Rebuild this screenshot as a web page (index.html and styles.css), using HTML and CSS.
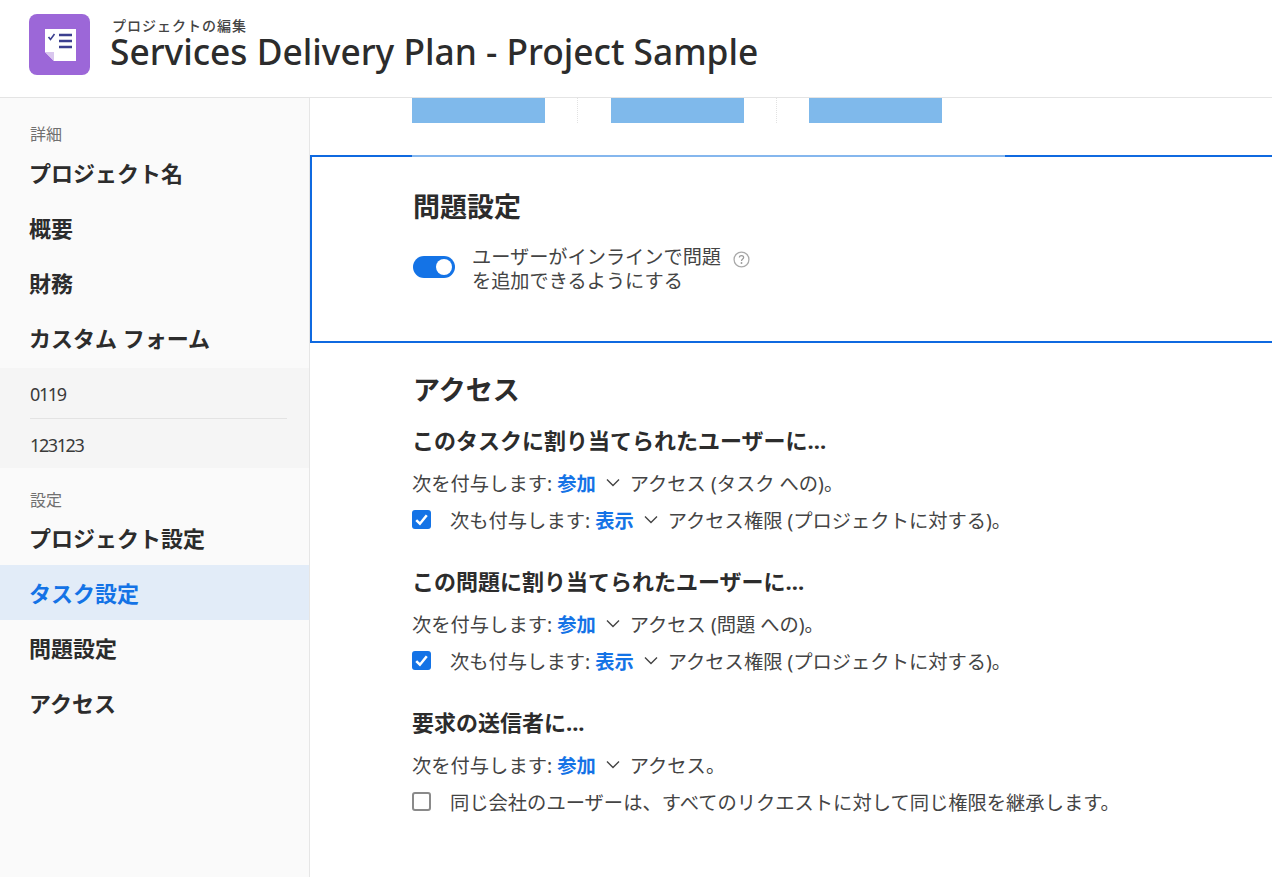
FILE: index.html
```html
<!DOCTYPE html>
<html lang="ja">

<head>
    <meta charset="UTF-8">
    <meta name="viewport" content="width=device-width, initial-scale=1.0">
    <title>Services Delivery Plan - Project Sample</title>

    <link rel="stylesheet" href="styles.css">
</head>

<body>
    <header class="top">
        <div class="logo">
            <svg width="32" height="33" viewBox="0 0 32 33">
                <path d="M1 1H32V33H10L1 24Z" fill="#fff"/>
                <path d="M1 24H10V33Z" fill="#d9c6ee"/>
                <path d="M4.500 9l2 2.500L10.500 6" fill="none" stroke="#3b3f8f" stroke-width="1.600"/>
                <path d="M15 7H28M15 13H28M15 19H28" stroke="#3b3f8f" stroke-width="2.400"/>
            </svg>
        </div>
        <div class="title-block">
            <div class="subtitle">プロジェクトの編集</div>
            <h1>Services Delivery Plan - Project Sample</h1>
        </div>
    </header>

    <div class="page">
        <nav class="side">
            <div class="side-label">詳細</div>
            <a class="side-item">プロジェクト名</a>
            <a class="side-item">概要</a>
            <a class="side-item">財務</a>
            <a class="side-item">カスタム フォーム</a>
            <div class="side-forms">
                <a class="form-item">0119</a>
                <a class="form-item">123123</a>
            </div>
            <div class="side-label second">設定</div>
            <a class="side-item">プロジェクト設定</a>
            <a class="side-item active">タスク設定</a>
            <a class="side-item">問題設定</a>
            <a class="side-item">アクセス</a>
        </nav>

        <main class="content">
            <div class="tabs">
                <span class="tab"></span>
                <span class="tab-gap"></span>
                <span class="tab"></span>
                <span class="tab-gap"></span>
                <span class="tab"></span>
            </div>

            <section class="issue-box">
                <h2>問題設定</h2>
                <div class="toggle-row">
                    <span class="toggle"></span>
                    <span class="toggle-text">ユーザーがインラインで問題<br>を追加できるようにする</span>
                    <svg class="help" width="17" height="17" viewBox="0 0 16 16">
                        <circle cx="8" cy="8" r="7" fill="none" stroke="#aaa" stroke-width="1.200"/>
                        <path d="M6 6.200C6 4.900 7 4.300 8 4.300S10 5 10 6.100C10 7.500 8 7.500 8 9.300" fill="none" stroke="#999" stroke-width="1.200"/>
                        <circle cx="8" cy="11.300" r=".9" fill="#999"/>
                    </svg>
                </div>
            </section>

            <section class="access">
                <h2>アクセス</h2>

                <h3>このタスクに割り当てられたユーザーに...</h3>
                <p class="line">次を付与します: <b class="pick">参加</b><svg class="chev" width="14" height="9" viewBox="0 0 14 9"><path d="M1 1.500L7 7.500L13 1.500" fill="none" stroke="#444" stroke-width="1.400"/></svg>アクセス (タスク への)。</p>
                <p class="line"><span class="check on"><svg width="19" height="19" viewBox="0 0 18 18"><path d="M4 9.500L7.500 13L14 5" fill="none" stroke="#fff" stroke-width="2.400"/></svg></span>次も付与します: <b class="pick">表示</b><svg class="chev" width="14" height="9" viewBox="0 0 14 9"><path d="M1 1.500L7 7.500L13 1.500" fill="none" stroke="#444" stroke-width="1.400"/></svg>アクセス権限 (プロジェクトに対する)。</p>

                <h3>この問題に割り当てられたユーザーに...</h3>
                <p class="line">次を付与します: <b class="pick">参加</b><svg class="chev" width="14" height="9" viewBox="0 0 14 9"><path d="M1 1.500L7 7.500L13 1.500" fill="none" stroke="#444" stroke-width="1.400"/></svg>アクセス (問題 への)。</p>
                <p class="line"><span class="check on"><svg width="19" height="19" viewBox="0 0 18 18"><path d="M4 9.500L7.500 13L14 5" fill="none" stroke="#fff" stroke-width="2.400"/></svg></span>次も付与します: <b class="pick">表示</b><svg class="chev" width="14" height="9" viewBox="0 0 14 9"><path d="M1 1.500L7 7.500L13 1.500" fill="none" stroke="#444" stroke-width="1.400"/></svg>アクセス権限 (プロジェクトに対する)。</p>

                <h3>要求の送信者に...</h3>
                <p class="line">次を付与します: <b class="pick">参加</b><svg class="chev" width="14" height="9" viewBox="0 0 14 9"><path d="M1 1.500L7 7.500L13 1.500" fill="none" stroke="#444" stroke-width="1.400"/></svg>アクセス。</p>
                <p class="line"><span class="check"></span>同じ会社のユーザーは、すべてのリクエストに対して同じ権限を継承します。</p>
            </section>
        </main>
    </div>
</body>

</html>
```

FILE: styles.css
```css
html,
body {
    margin: 0;
    height: 100%;
    overflow: hidden;
    background: #fff;
    font-family: "Noto Sans", "Noto Sans CJK JP", sans-serif;
    color: #2c2c2c;
}

.top {
    display: flex;
    align-items: flex-start;
    gap: 20px;
    height: 83px;
    padding: 14px 0 0 29px;
    border-bottom: 1px solid #e4e4e4;
}

.logo {
    display: flex;
    align-items: center;
    justify-content: center;
    width: 61px;
    height: 61px;
    border-radius: 8px;
    background: #9c67d8;
}

.title-block {
    margin-top: 4px;
}

.subtitle {
    margin-left: 2px;
    font-size: 14px;
    font-weight: 500;
    line-height: 16px;
    letter-spacing: 1px;
    color: #444;
}

h1 {
    margin: -2px 0 0;
    font-size: 35.300px;
    font-weight: 500;
    line-height: 38px;
}

.page {
    display: flex;
    height: 779px;
}

.side {
    flex: none;
    width: 310px;
    padding-top: 26px;
    box-sizing: border-box;
    background: #fafafa;
    border-right: 1px solid #e6e6e6;
}

.side-label {
    height: 20px;
    margin-bottom: 1px;
    padding-left: 30px;
    font-size: 16px;
    line-height: 20px;
    color: #707070;
}

.side-label.second {
    margin: 22px 0 0;
}

.side-item {
    display: block;
    height: 55px;
    padding-left: 29px;
    font-size: 22px;
    font-weight: 700;
    line-height: 57px;
    color: #2c2c2c;
}

.side-item.active {
    background: #e2ecf8;
    color: #1473e6;
}

.side-forms {
    margin-top: 3px;
    padding: 0 22px 0 30px;
    background: #f5f5f5;
}

.form-item {
    display: block;
    height: 50px;
    box-sizing: border-box;
    font-size: 18px;
    line-height: 52px;
    letter-spacing: -1.400px;
    color: #3a3a3a;
}

.form-item + .form-item {
    border-top: 1px solid #e3e3e3;
}

.content {
    flex: 1;
    min-width: 0;
}

.tabs {
    display: flex;
    height: 25px;
    padding-left: 102px;
}

.tab {
    width: 133px;
    height: 25px;
    background: #7fb9eb;
}

.tab-gap {
    display: flex;
    justify-content: center;
    width: 65.500px;
}

.tab-gap::after {
    content: "";
    border-left: 1px dotted #e2e2e2;
}

.issue-box {
    position: relative;
    height: 188px;
    margin-top: 32px;
    padding: 32px 0 0 101px;
    box-sizing: border-box;
    border: 2px solid #0f69e0;
    border-right: 0;
}

/* lighter strip of the border, under the tabs */
.issue-box::before {
    content: "";
    position: absolute;
    top: -2px;
    left: 100px;
    width: 593px;
    height: 2px;
    background: #85b7ee;
}

h2 {
    margin: 0;
    font-size: 27px;
    font-weight: 700;
    line-height: 36px;
    color: #2c2c2c;
}

.toggle-row {
    display: flex;
    align-items: flex-start;
    margin-top: 20px;
}

.toggle {
    flex: none;
    position: relative;
    width: 42px;
    height: 22px;
    margin-top: 11px;
    border-radius: 11px;
    background: #1473e6;
}

.toggle::after {
    content: "";
    position: absolute;
    top: 3px;
    right: 3px;
    width: 16px;
    height: 16px;
    border-radius: 50%;
    background: #fff;
}

.toggle-text {
    margin-left: 17px;
    font-size: 19.200px;
    line-height: 24px;
    color: #444;
}

.help {
    margin: 6px 0 0 12px;
}

.access {
    padding: 28px 0 0 102px;
}

.access h2 {
    margin-left: 1px;
    line-height: 38px;
}

h3 {
    margin: 16px 0 0;
    font-size: 22px;
    font-weight: 700;
    line-height: 30px;
    color: #2c2c2c;
}

.line {
    display: flex;
    align-items: center;
    height: 37px;
    margin: 0;
    font-size: 19.300px;
    color: #444;
    white-space: pre;
}

h3 + .line {
    margin-top: 9px;
}

.line + h3 {
    margin-top: 28px;
}

.pick {
    color: #1473e6;
    font-weight: 700;
}

.chev {
    margin: 0 10px;
}

.check {
    flex: none;
    display: flex;
    width: 19px;
    height: 19px;
    margin-right: 19px;
    border: 2px solid #8a8a8a;
    border-radius: 3px;
    box-sizing: border-box;
}

.check.on {
    border: 0;
    background: #1473e6;
}
```
